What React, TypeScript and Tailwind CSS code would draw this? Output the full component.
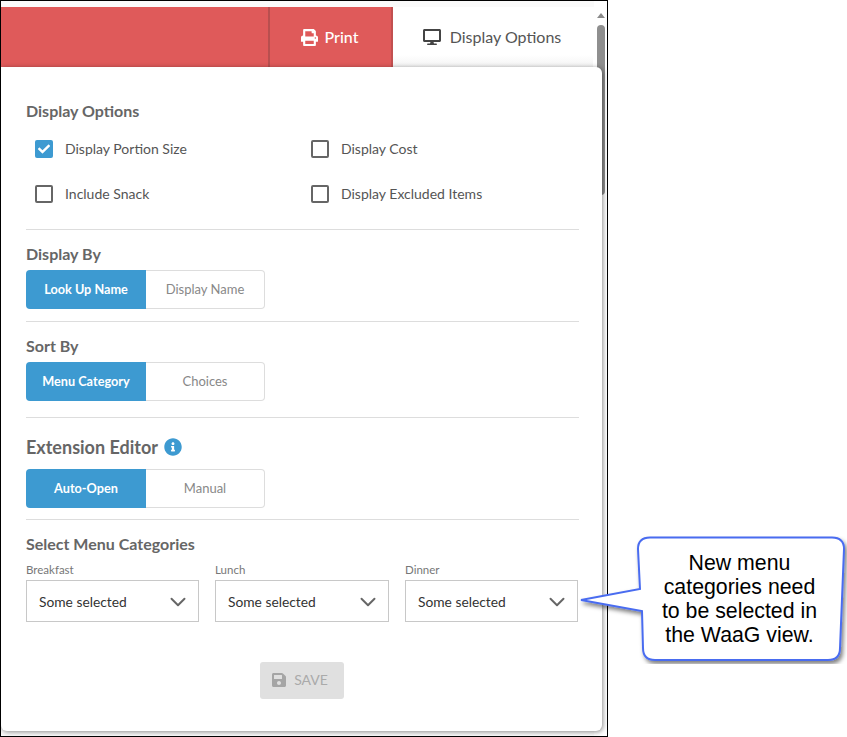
import { FaCheck, FaDesktop, FaInfoCircle, FaPrint, FaSave } from "react-icons/fa"
import { ChevronDown } from "lucide-react"

function CheckItem({ label, checked }: { label: string; checked?: boolean }) {
  return (
    <div className="flex items-center gap-[12px]">
      {checked ? (
        <div className="w-[18px] h-[18px] rounded-[2px] bg-[#3d9ad1] flex items-center justify-center">
          <FaCheck className="w-[12px] h-[12px] text-white" />
        </div>
      ) : (
        <div className="w-[18px] h-[18px] rounded-[2px] border-2 border-[#666666]" />
      )}
      <span className="text-[14px] leading-[18px] text-[#555555]">{label}</span>
    </div>
  )
}

function Toggle({ on, off }: { on: string; off: string }) {
  return (
    <div className="flex w-[239px] h-[39px] text-[13px]">
      <div className="w-[120px] bg-[#3d9ad1] rounded-l-[4px] flex items-center justify-center font-bold text-[12.7px] text-white">{on}</div>
      <div className="w-[119px] border border-l-0 border-[#dddddd] rounded-r-[4px] flex items-center justify-center text-[#888888]">{off}</div>
    </div>
  )
}

function Select({ label, className }: { label: string; className: string }) {
  return (
    <div className={className}>
      <div className="h-[15px] text-[11.5px] leading-[15px] text-[#777777]">{label}</div>
      <div className="mt-[3px] h-[42px] border border-[#c8c8c8] flex items-center justify-between pt-[2px] pl-[12px] pr-[7px]">
        <span className="text-[13.8px] text-[#333333]">Some selected</span>
        <ChevronDown className="w-[26px] h-[26px] text-[#666666]" strokeWidth={1.8} />
      </div>
    </div>
  )
}

export default function App() {
  return (
    <div className="relative w-[847px] h-[737px] bg-white overflow-hidden font-['Lato','Noto_Sans',sans-serif]">
      <div className="relative w-[608px] h-[737px] border border-black overflow-hidden bg-[#fafafa]">
        {/* top bar */}
        <div className="mt-[6px] flex h-[60px] pr-[14px] bg-white">
          <div className="w-[269px] bg-[#df5a5a] border-r-2 border-[#b84f4f]" />
          <div className="w-[123px] bg-[#df5a5a] border-r-2 border-[#c25050] flex items-center justify-center gap-[7px] pr-[2px] text-white text-[16px] font-medium">
            <FaPrint className="w-[17px] h-[17px]" />
            <span>Print</span>
          </div>
          <div className="flex-1 flex items-center justify-center gap-[9px] pr-[2px] text-[16px] text-[#555555] bg-gradient-to-b from-white from-80% to-[#f3f3f3]">
            <FaDesktop className="w-[18px] h-[18px] text-[#444444]" />
            <span>Display Options</span>
          </div>
        </div>

        {/* scrollbar */}
        <div className="absolute right-0 top-0 bottom-0 w-[13px] bg-white">
          <div className="mx-auto mt-[12px] w-0 h-0 border-x-[4px] border-x-transparent border-b-[5px] border-b-[#8a8a8a]" />
          <div className="mx-auto mt-[7px] w-[8px] h-[170px] rounded-full bg-[#8f8f8f]" />
        </div>

        {/* panel */}
        <div className="relative w-[601px] h-[664px] bg-white rounded-br-[6px] rounded-tr-[6px] rounded-bl-[6px] shadow-[1px_1px_5px_rgba(0,0,0,0.45)] pl-[25px] pr-[23px] pt-[34px]">
          <h2 className="text-[16px] leading-[20px] font-bold text-[#666666]">Display Options</h2>
          <div className="mt-[19px] ml-[9px] grid grid-cols-[276px_1fr] gap-y-[27px]">
            <CheckItem label="Display Portion Size" checked />
            <CheckItem label="Display Cost" />
            <CheckItem label="Include Snack" />
            <CheckItem label="Display Excluded Items" />
          </div>
          <div className="mt-[26px] border-t border-[#dddddd]" />

          <h2 className="mt-[14px] text-[16px] leading-[20px] font-bold text-[#666666]">Display By</h2>
          <div className="mt-[6px]"><Toggle on="Look Up Name" off="Display Name" /></div>
          <div className="mt-[12px] border-t border-[#dddddd]" />

          <h2 className="mt-[14px] text-[16px] leading-[20px] font-bold text-[#666666]">Sort By</h2>
          <div className="mt-[6px]"><Toggle on="Menu Category" off="Choices" /></div>
          <div className="mt-[16px] border-t border-[#dddddd]" />

          <div className="mt-[17px] flex items-center gap-[6px] h-[24px]">
            <h2 className="text-[18px] font-bold text-[#666666]">Extension Editor</h2>
            <FaInfoCircle className="w-[18px] h-[18px] text-[#3d9ad1]" />
          </div>
          <div className="mt-[10px]"><Toggle on="Auto-Open" off="Manual" /></div>
          <div className="mt-[11px] border-t border-[#dddddd]" />

          <h2 className="mt-[14px] text-[16px] leading-[20px] font-bold text-[#666666]">Select Menu Categories</h2>
          <div className="mt-[8px] flex">
            <Select label="Breakfast" className="w-[173px]" />
            <Select label="Lunch" className="ml-[16px] w-[174px]" />
            <Select label="Dinner" className="ml-[16px] w-[173px]" />
          </div>

          <div className="mt-[40px] flex justify-center pr-[2px]">
            <div className="w-[84px] h-[37px] rounded-[3px] bg-[#e0e0e0] flex items-center justify-center gap-[7px] pr-[4px] pb-[2px] text-[14px] text-[#aaaaaa]">
              <FaSave className="w-[16px] h-[16px] text-[#a5a5a5]" />
              <span>SAVE</span>
            </div>
          </div>
        </div>
      </div>

      {/* callout */}
      <div className="absolute left-[578px] top-[536px] w-[269px] h-[128px]">
        <svg className="absolute inset-0" width="269" height="128" viewBox="0 0 269 128">
          <defs>
            <filter id="callout-shadow" x="-10%" y="-10%" width="125%" height="125%">
              <feDropShadow dx="2" dy="3" stdDeviation="2" floodColor="#000000" floodOpacity="0.5" />
            </filter>
          </defs>
          <path
            d="M72 1.5 H254 Q266 1.5 266 13 L262 112 Q262 124 250 124 H77 Q65 124 65 112 L64 75 L3 64 L62 53 L60 13 Q60 1.5 72 1.5 Z"
            fill="#ffffff"
            stroke="#4a6cf0"
            strokeWidth="2"
            filter="url(#callout-shadow)"
          />
        </svg>
        <div className="absolute left-[62px] top-[15px] w-[199px] text-center text-[21.3px] leading-[24px] text-black font-['Liberation_Sans',sans-serif]">
          New menu
          <br />
          categories need
          <br />
          to be selected in
          <br />
          the WaaG view.
        </div>
      </div>
    </div>
  )
}
